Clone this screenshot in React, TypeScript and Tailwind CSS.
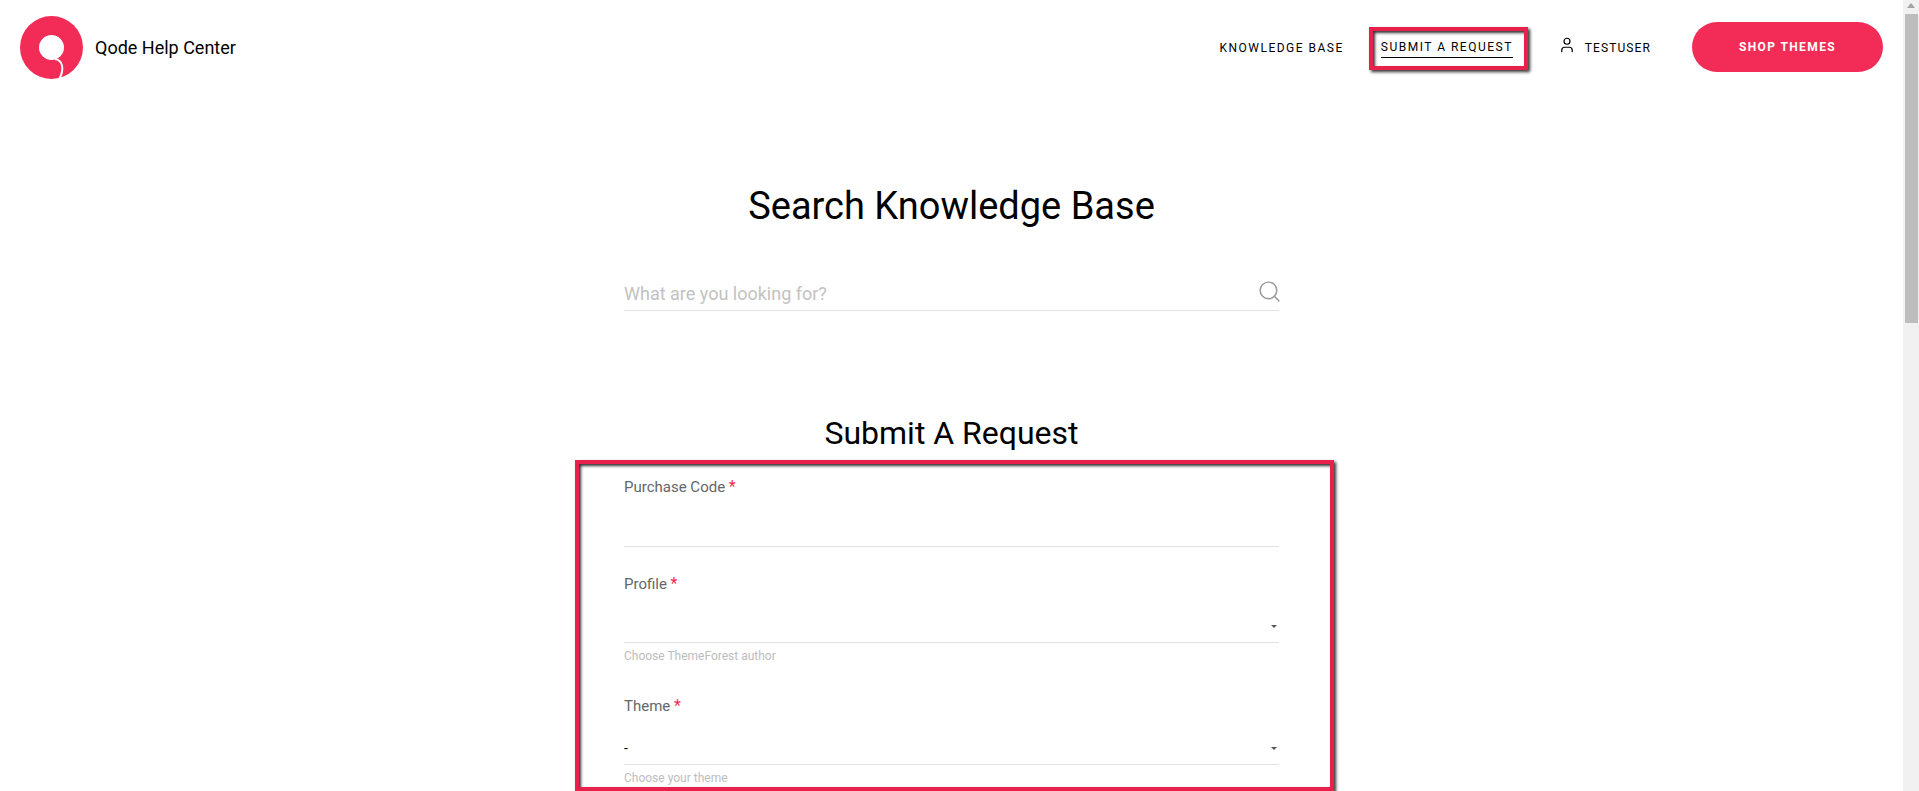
import { Search, User } from "lucide-react";

const ANNOTATION_CLASS =
  "border-4 border-[#e8214c] shadow-[2px_2px_3px_#333,inset_2px_2px_3px_#333]";

type FieldProps = {
  label: string;
  value?: string;
  helper?: string;
  isSelect?: boolean;
  className?: string;
};

function Field({ label, value, helper, isSelect = false, className = "" }: FieldProps) {
  return (
    <div className={className}>
      <p className="text-[15px] leading-6 text-[#666]">
        {label} <span className="text-base text-[#f22b57]">*</span>
      </p>
      <div
        className={`flex items-end justify-between border-b border-[#e2e2e2] text-sm text-black ${
          isSelect ? "h-[47px] pb-[6px]" : "h-[48px]"
        }`}
      >
        <span className="leading-5">{value}</span>
        {isSelect && (
          <span className="mr-[2px] mb-[8px] border-x-[3px] border-t-[3px] border-x-transparent border-t-[#555]" />
        )}
      </div>
      {helper && <p className="mt-[5px] text-xs leading-4 text-[#bdbdbd]">{helper}</p>}
    </div>
  );
}

function Logo() {
  return (
    <svg width="63" height="63" viewBox="0 0 63 63" aria-hidden="true">
      <circle cx="31.5" cy="31.5" r="31.5" fill="#f22b57" />
      <circle cx="31.5" cy="31.5" r="12.5" fill="#fff" />
      <path d="M35 43 C42 44 45 52 39.5 62.5" fill="none" stroke="#fff" strokeWidth="2" />
    </svg>
  );
}

function SiteHeader() {
  return (
    <header className="flex h-[95px] items-center justify-between px-5">
      <div className="flex items-center gap-3">
        <Logo />
        <span className="text-lg text-black">Qode Help Center</span>
      </div>
      <nav className="flex items-center text-xs tracking-[1.5px] whitespace-nowrap text-black">
        <a>KNOWLEDGE BASE</a>
        <a className={`mt-[2px] ml-[25px] h-[43px] w-[159px] pt-[9px] pl-2 ${ANNOTATION_CLASS}`}>
          <span className="block w-[132px] border-b border-black pb-[3px] leading-[14px]">
            SUBMIT A REQUEST
          </span>
        </a>
        <a className="ml-[30px] flex items-center gap-[9px] tracking-[1.1px]">
          <User size={18} strokeWidth={1.6} className="-mt-[5px]" />
          TESTUSER
        </a>
        <a className="-mt-px ml-[41px] flex h-[50px] w-[191px] items-center justify-center rounded-full bg-[#f22b57] font-bold tracking-[1.4px] text-white">
          SHOP THEMES
        </a>
      </nav>
    </header>
  );
}

export default function App() {
  return (
    <div className="flex h-[791px] overflow-hidden bg-white font-['Roboto',sans-serif]">
      <div className="min-w-0 flex-1">
        <SiteHeader />
        <main>
          <h1 className="mt-[87px] text-center text-[38px] leading-[48px] text-black">
            Search Knowledge Base
          </h1>
          <div className="mx-auto mt-[40px] flex h-[41px] w-[655px] items-center justify-between border-b border-[#e2e2e2] pt-[7px]">
            <span className="text-lg text-[#c2c2c2]">What are you looking for?</span>
            <Search size={25} strokeWidth={1.4} className="-mr-[3px] -mt-[4px] text-[#9a9a9a]" />
          </div>
          <h2 className="mt-[102px] text-center text-[32px] leading-10 text-black">Submit A Request</h2>
          <form className={`mt-[7px] ml-[575px] h-[331px] w-[759px] pt-[11px] pl-[45px] ${ANNOTATION_CLASS}`}>
            <div className="w-[655px]">
              <Field label="Purchase Code" />
              <Field label="Profile" helper="Choose ThemeForest author" isSelect className="mt-[25px]" />
              <Field label="Theme" value="-" helper="Choose your theme" isSelect className="mt-[30px]" />
            </div>
          </form>
        </main>
      </div>
      <aside className="flex w-4 shrink-0 flex-col items-center bg-[#f1f1f1] pt-[3px]">
        <span className="border-x-[4px] border-b-[5px] border-x-transparent border-b-[#a3a3a3]" />
        <span className="mt-[6px] h-[309px] w-[13px] bg-[#bdbdbd]" />
      </aside>
    </div>
  );
}
